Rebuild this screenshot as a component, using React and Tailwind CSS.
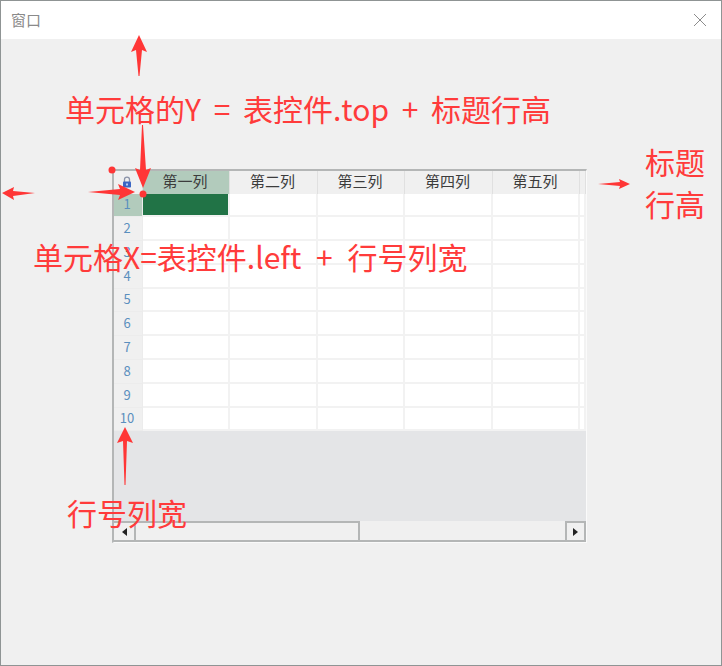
import React from "react";

const columns = ["第一列", "第二列", "第三列", "第四列", "第五列", ""];
const rows = [1, 2, 3, 4, 5, 6, 7, 8, 9, 10];
const gridCols = "grid grid-cols-[29px_87px_88px_87px_88px_87px_6px]";

const Arrow = ({ points }) => <polygon points={points} fill="#ff3636" />;

const Note = ({ className, children }) => (
  <div className={`absolute text-[#ff3b3b] whitespace-nowrap leading-none ${className}`}>{children}</div>
);

const LockIcon = () => (
  <svg width="10" height="12" viewBox="0 0 10 12">
    <path d="M2.5 6V3.6a2.5 2.5 0 0 1 5 0V6" fill="none" stroke="#8b93a8" strokeWidth="1.3" />
    <rect x="1" y="5.5" width="8" height="6" rx="0.8" fill="#3b66c4" />
    <rect x="4" y="7.5" width="2" height="2" fill="#b8c9ee" />
  </svg>
);

const App = () => {
  return (
    <div
      className="relative w-[722px] h-[666px] bg-[#f0f0f0] border border-[#8f9494] overflow-hidden flex flex-col"
      style={{ fontFamily: '"Noto Sans CJK SC", "Liberation Sans", sans-serif' }}
    >
      {/* title bar */}
      <div className="h-[38px] bg-white flex items-center justify-between pl-[10px] pr-[14px] shrink-0">
        <span className="text-[15px] text-[#8a8a8a]">窗口</span>
        <svg width="14" height="14" viewBox="0 0 14 14">
          <path d="M1 1l12 12M13 1L1 13" stroke="#8c8c8c" strokeWidth="1" />
        </svg>
      </div>

      {/* table control */}
      <div className="ml-[111px] mt-[130px] w-[475px] h-[374px] flex flex-col border-l-2 border-t-2 border-r border-b border-l-[#b4b6b6] border-t-[#b4b6b6] border-r-[#fafafa] border-b-[#fafafa] bg-white">
        <div className={`${gridCols} h-[22.5px] bg-[#f0f0f0] shrink-0`}>
          <div className="bg-[#f0f0f0] border-r border-[#e0e0e0] flex items-center justify-center pb-[1px] pr-[2px]">
            <LockIcon />
          </div>
          {columns.map((c, i) => (
            <div
              key={i}
              className={`flex items-center justify-center text-[15px] leading-none pb-[4px] pr-[2px] text-[#3c3c3c] border-r border-[#e0e0e0] ${i === 0 ? "bg-[#b2cbbc]" : ""}`}
            >
              {c}
            </div>
          ))}
        </div>
        {rows.map((r) => (
          <div key={r} className={`${gridCols} h-[23.8px] shrink-0`}>
            <div
              className={`flex items-center justify-center text-[13px] pb-[2px] pr-[2px] text-[#5b8fbe] border-r border-b border-[#ececec] ${r === 1 ? "bg-[#b2cbbc]" : "bg-[#f0f0f0]"}`}
            >
              {r}
            </div>
            {columns.map((c, i) => (
              <div
                key={i}
                className={`border-r-2 border-b-2 border-[#f2f2f2] ${r === 1 && i === 0 ? "bg-[#217346] border-[#cfdcd4]" : "bg-white"}`}
              />
            ))}
          </div>
        ))}
        <div className="flex-1 bg-[#e4e5e7]" />
        {/* horizontal scrollbar */}
        <div className="h-[21px] flex bg-[#f0f0f0] border-b-2 border-[#b4b6b6] shrink-0">
          <div className="w-[20px] flex items-center justify-center border-t-2 border-[#b4b6b6]">
            <div className="w-0 h-0 border-y-[4px] border-y-transparent border-r-[5px] border-r-[#222]" />
          </div>
          <div className="w-[226px] border-2 border-b-0 border-[#b4b6b6]" />
          <div className="flex-1" />
          <div className="w-[21px] flex items-center justify-center border-2 border-b-0 border-[#b4b6b6]">
            <div className="w-0 h-0 border-y-[4px] border-y-transparent border-l-[5px] border-l-[#222]" />
          </div>
        </div>
      </div>

      {/* annotations */}
      <Note className="left-[64px] top-[92px] text-[30px] [word-spacing:6px]">单元格的Y = 表控件.top + 标题行高</Note>
      <Note className="left-[32px] top-[240px] text-[30px] [word-spacing:8px]">单元格X=表控件.left + 行号列宽</Note>
      <Note className="left-[66px] top-[496px] text-[30px]">行号列宽</Note>
      <Note className="left-[644px] top-[145px] text-[30px]">标题</Note>
      <Note className="left-[644px] top-[187px] text-[30px]">行高</Note>

      <svg className="absolute -left-px -top-px pointer-events-none" width="722" height="666" viewBox="0 0 722 666">
        <Arrow points="139,35 147,52 142,50 139.5,76 138.5,76 136,50 131,52" />
        <Arrow points="143,188 135,168 140,170 142,125 143,125 146,170 151,168" />
        <Arrow points="2,193 14,187 13,191 35,193 13,196 14,200" />
        <Arrow points="135,192 118,184 120,189 88,192 120,195 118,200" />
        <Arrow points="630,184 619,179 620,182 598,184 620,186 619,189" />
        <Arrow points="125,427 133,443 127,441 125.5,485 124.5,485 123,441 117,443" />
        <circle cx="112" cy="170" r="3.5" fill="#ff3636" />
        <circle cx="143" cy="194" r="3.5" fill="#ff3636" />
      </svg>
    </div>
  );
};

export default App;
